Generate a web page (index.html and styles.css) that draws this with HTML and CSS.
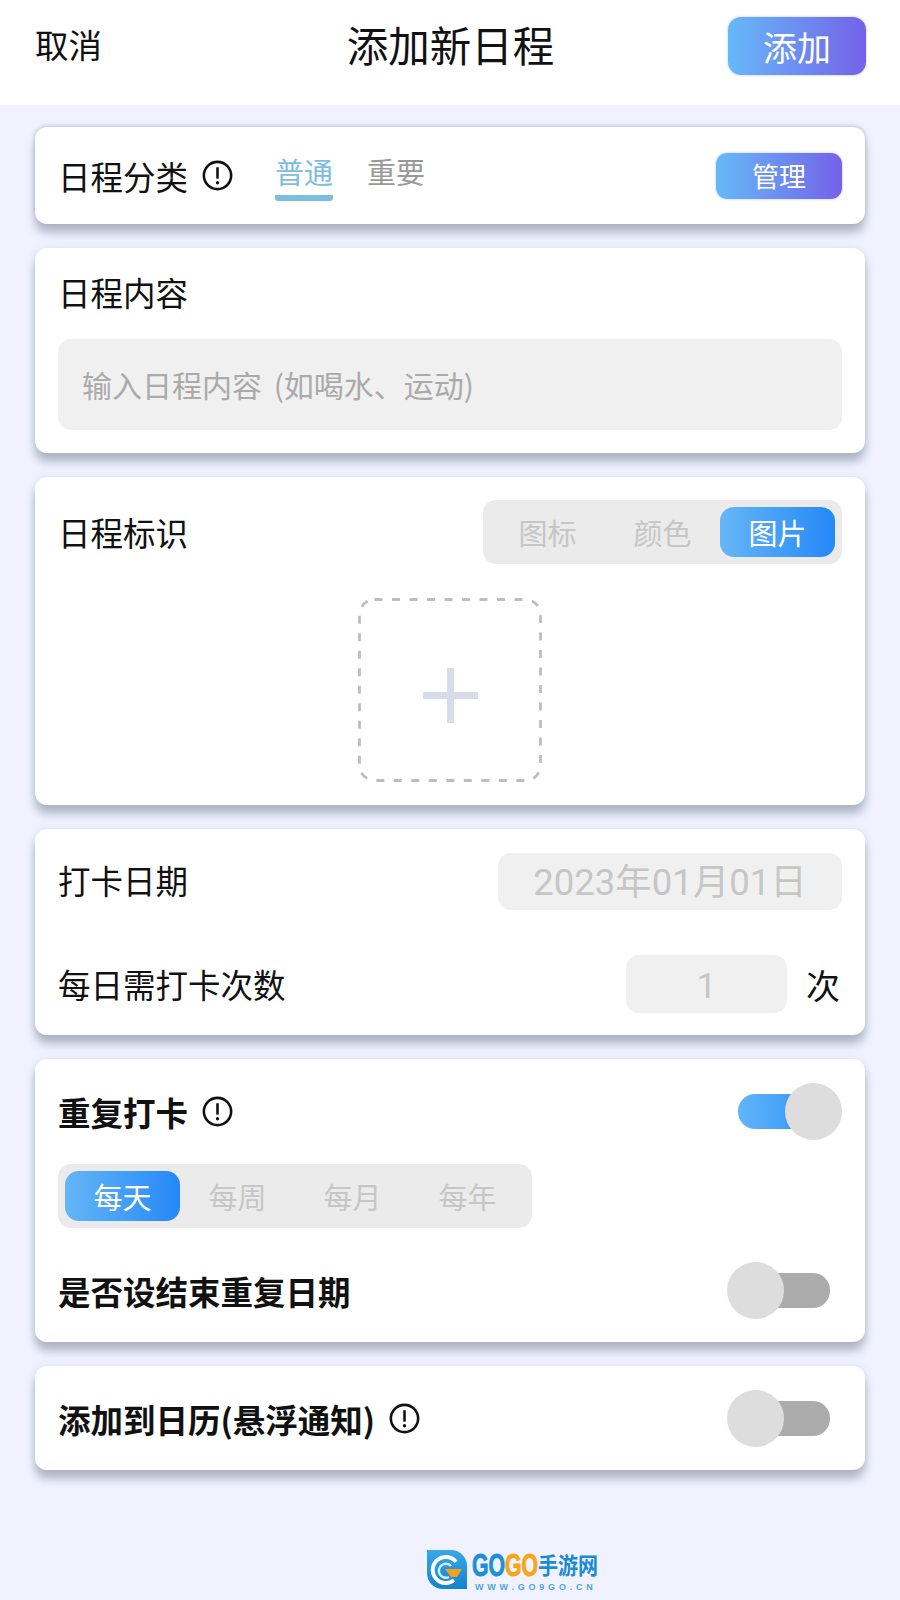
FILE: index.html
```html
<!DOCTYPE html>
<html lang="zh-CN">
<head>
    <meta charset="UTF-8">
    <title>添加新日程</title>

    <link rel="stylesheet" href="styles.css">
</head>
<body>
    <header class="topbar">
        <span class="cancel">取消</span>
        <h1 class="page-title">添加新日程</h1>
        <button class="grad-btn add-btn">添加</button>
    </header>

    <main class="cards">
        <section class="card category">
            <span class="label">日程分类</span>
            <svg class="info" viewBox="0 0 30 30"><circle cx="15" cy="15" r="13.2"/><path d="M15 7v11"/><circle class="dot" cx="15" cy="22" r="1.6"/></svg>
            <div class="tabs">
                <span class="tab tab-active">普通</span>
                <span class="tab">重要</span>
            </div>
            <button class="grad-btn manage-btn">管理</button>
        </section>

        <section class="card content">
            <div class="label content-label">日程内容</div>
            <div class="field content-input">输入日程内容 (如喝水、运动)</div>
        </section>

        <section class="card mark">
            <div class="row">
                <span class="label">日程标识</span>
                <div class="segment">
                    <span class="seg-item">图标</span>
                    <span class="seg-item">颜色</span>
                    <span class="seg-item seg-active">图片</span>
                </div>
            </div>
            <div class="upload">
                <svg class="upload-border" viewBox="0 0 184 184"><rect x="1.5" y="1.5" width="181" height="181" rx="15"/></svg>
                <svg class="plus" viewBox="0 0 56 56"><path d="M28 0v56M0 28h56"/></svg>
            </div>
        </section>

        <section class="card dates">
            <div class="row">
                <span class="label date-label">打卡日期</span>
                <div class="field date-input">2023年01月01日</div>
            </div>
            <div class="row times-row">
                <span class="label">每日需打卡次数</span>
                <div class="times">
                    <div class="field times-input">1</div>
                    <span class="times-unit">次</span>
                </div>
            </div>
        </section>

        <section class="card repeat">
            <div class="row">
                <div class="label-group">
                    <span class="label bold">重复打卡</span>
                    <svg class="info" viewBox="0 0 30 30"><circle cx="15" cy="15" r="13.2"/><path d="M15 7v11"/><circle class="dot" cx="15" cy="22" r="1.6"/></svg>
                </div>
                <div class="toggle toggle-on"><i class="track"></i><i class="knob"></i></div>
            </div>
            <div class="segment repeat-segment">
                <span class="seg-item seg-active">每天</span>
                <span class="seg-item">每周</span>
                <span class="seg-item">每月</span>
                <span class="seg-item">每年</span>
            </div>
            <div class="row end-row">
                <span class="label bold">是否设结束重复日期</span>
                <div class="toggle"><i class="track"></i><i class="knob"></i></div>
            </div>
        </section>

        <section class="card calendar">
            <div class="row">
                <div class="label-group">
                    <span class="label bold">添加到日历(悬浮通知)</span>
                    <svg class="info" viewBox="0 0 30 30"><circle cx="15" cy="15" r="13.2"/><path d="M15 7v11"/><circle class="dot" cx="15" cy="22" r="1.6"/></svg>
                </div>
                <div class="toggle"><i class="track"></i><i class="knob"></i></div>
            </div>
        </section>
    </main>

    <footer class="watermark">
        <svg class="wm-icon" viewBox="0 0 40 40">
            <defs>
                <linearGradient id="leaf" x1="0" y1="0" x2="0" y2="1">
                    <stop offset="0" stop-color="#38a8e6"/>
                    <stop offset="1" stop-color="#1183d0"/>
                </linearGradient>
            </defs>
            <path fill="url(#leaf)" d="M0 0H24C33 0 40 7 40 16V39H16C7 39 0 32 0 23Z"/>
            <path fill="none" stroke="#fff" stroke-width="4" d="M29 12A13 13 0 1 0 27 30"/>
            <path fill="none" stroke="#d5eefa" stroke-width="2.5" d="M24 16A7 7 0 1 0 22 27"/>
            <path fill="#f2a51c" d="M18 19H35L30 27H24Z"/>
        </svg>
        <div class="wm-text">
            <div class="wm-name">
                <span class="wm-go"><span class="wm-go-text wm-blue">GO</span></span>
                <span class="wm-go"><span class="wm-go-text wm-orange">GO</span></span>
                <span class="wm-cn">手游网</span>
            </div>
            <div class="wm-url">WWW.GO9GO.CN</div>
        </div>
    </footer>
</body>
</html>
```

FILE: styles.css
```css
html, body {
    margin: 0;
}

body {
    width: 900px;
    height: 1600px;
    overflow: hidden;
    background: #f0f3ff;
    font-family: "Noto Sans CJK SC", "Noto Sans", sans-serif;
    color: #111;
}

button {
    border: none;
    padding: 0;
    font-family: inherit;
}

.topbar {
    height: 105px;
    box-sizing: border-box;
    padding: 17px 34px 0 35px;
    background: #fff;
    display: grid;
    grid-template-columns: 1fr auto 1fr;
    align-items: start;
}

.cancel {
    font-size: 33.5px;
    line-height: 54px;
}

.page-title {
    margin: 0;
    font-size: 41.5px;
    font-weight: 400;
    line-height: 54px;
}

.grad-btn {
    background: linear-gradient(90deg, #66b9f8, #7462e8);
    color: #fff;
    box-shadow: 0 0 3px rgba(110, 120, 240, .45);
}

.add-btn {
    justify-self: end;
    width: 138px;
    height: 58px;
    border-radius: 13px;
    font-size: 34px;
}

.manage-btn {
    margin-left: auto;
    width: 126px;
    height: 46px;
    border-radius: 11px;
    font-size: 27px;
}

.cards {
    padding: 22px 35px 0;
    display: flex;
    flex-direction: column;
    gap: 24px;
}

.card {
    background: #fff;
    border-radius: 12px;
    padding: 0 23px;
    box-shadow: 0 9px 10px rgba(80, 90, 115, .38), 0 0 8px rgba(80, 90, 115, .12);
}

.row {
    display: flex;
    align-items: center;
    justify-content: space-between;
}

.label {
    font-size: 32.5px;
    line-height: 50px;
}

.bold {
    font-weight: 700;
}

.label-group {
    display: flex;
    align-items: center;
}

.info {
    width: 31px;
    height: 31px;
    margin-left: 14px;
    fill: none;
    stroke: #111;
    stroke-width: 2.5;
}

.info .dot {
    fill: #111;
    stroke: none;
}

.category {
    height: 97px;
    display: flex;
    align-items: center;
    box-shadow: 0 9px 10px rgba(80, 90, 115, .38), 0 -1px 4px rgba(80, 90, 115, .32);
}

.tabs {
    display: flex;
    gap: 34px;
    margin-left: 42px;
}

.tab {
    width: 58px;
    font-size: 29px;
    line-height: 40px;
    color: #999;
    padding-bottom: 10px;
    border-radius: 3px;
}

.tab-active {
    color: #7dbde0;
    background: linear-gradient(#7dbde0, #7dbde0) no-repeat bottom / 100% 6px;
}

.field {
    background: #f0f0f0;
    border-radius: 13px;
    color: #c6c6c6;
}

.content {
    padding-top: 19px;
    padding-bottom: 23px;
}

.content-label {
    margin-bottom: 22px;
}

.content-input {
    height: 91px;
    box-sizing: border-box;
    padding-left: 24px;
    font-size: 30px;
    line-height: 90px;
    word-spacing: 5px;
    color: #aaa;
}

.mark {
    padding-top: 23px;
    padding-bottom: 23px;
}

.segment {
    background: #ebebeb;
    border-radius: 13px;
    padding: 7px;
    display: flex;
}

.seg-item {
    width: 115px;
    height: 50px;
    border-radius: 14px;
    font-size: 29px;
    line-height: 50px;
    text-align: center;
    color: #c6c6c6;
}

.seg-active {
    background: linear-gradient(90deg, #66b6f6, #2488f8);
    color: #fff;
}

.upload {
    position: relative;
    width: 184px;
    height: 184px;
    margin: 34px auto 0;
    display: flex;
    align-items: center;
    justify-content: center;
}

.upload-border {
    position: absolute;
    inset: 0;
    fill: none;
    stroke: #bdbdc2;
    stroke-width: 2.8;
    stroke-dasharray: 8 9.5;
}

.plus {
    width: 55px;
    height: 55px;
    margin-top: 10px;
    fill: none;
    stroke: #d8dbe8;
    stroke-width: 7;
}

.dates {
    padding-top: 24px;
    padding-bottom: 22px;
}

.date-label {
    padding-bottom: 3px;
}

.date-input {
    width: 344px;
    height: 57px;
    font-family: Roboto, "Noto Sans CJK SC", sans-serif;
    font-size: 36.5px;
    line-height: 60px;
    text-align: center;
}

.times-row {
    margin-top: 45px;
}

.times {
    display: flex;
    align-items: center;
    gap: 19px;
    margin-right: 2px;
}

.times-input {
    width: 161px;
    height: 58px;
    font-family: Roboto, sans-serif;
    font-size: 35px;
    line-height: 63px;
    text-align: center;
}

.times-unit {
    font-size: 34px;
}

.repeat {
    padding-top: 24px;
    padding-bottom: 23px;
}

.repeat-segment {
    width: fit-content;
    margin-top: 24px;
}

.end-row {
    margin-top: 34px;
}

.calendar {
    padding-top: 24px;
    padding-bottom: 23px;
}

.toggle {
    position: relative;
    width: 115px;
    height: 57px;
}

.track {
    position: absolute;
    left: 11px;
    right: 12px;
    top: 11px;
    height: 35px;
    border-radius: 17px;
    background: #acacac;
}

.knob {
    position: absolute;
    left: 0;
    top: 0;
    width: 57px;
    height: 57px;
    border-radius: 50%;
    background: #dddddd;
}

.toggle-on .track {
    background: linear-gradient(90deg, #62b5f8, #2a8cf6);
}

.toggle-on .knob {
    left: auto;
    right: 0;
}

.watermark {
    margin-top: 80px;
    margin-left: 427px;
    display: flex;
    gap: 5px;
}

.wm-icon {
    width: 40px;
    height: 40px;
}

.wm-name {
    display: flex;
    align-items: center;
    height: 30px;
}

.wm-go {
    display: block;
    width: 33px;
    height: 30px;
}

.wm-go-text {
    display: block;
    width: 50px;
    font-family: "Liberation Sans", sans-serif;
    font-size: 32px;
    font-weight: 700;
    line-height: 30px;
    transform: scaleX(.663);
    transform-origin: left;
    -webkit-text-stroke: 1px currentColor;
}

.wm-blue {
    color: #1c8fd8;
}

.wm-orange {
    color: #f7a616;
}

.wm-cn {
    font-size: 20px;
    font-weight: 700;
    line-height: 30px;
    color: #1a8ad4;
    transform: scaleY(1.15);
}

.wm-url {
    margin-top: 2px;
    padding-left: 3px;
    font-family: "Liberation Sans", sans-serif;
    font-size: 9px;
    font-weight: 700;
    line-height: 10px;
    letter-spacing: 3.8px;
    color: #4ea3dc;
}
```
